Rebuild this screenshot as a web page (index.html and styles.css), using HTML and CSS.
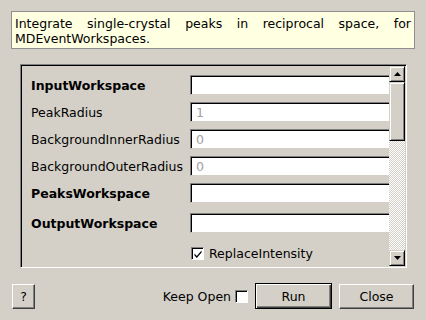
FILE: index.html
```html
<!DOCTYPE html>
<html>
<head>
<meta charset="utf-8">
<link rel="stylesheet" href="styles.css">
</head>
<body>
<div class="desc">Integrate single-crystal peaks in reciprocal space, for MDEventWorkspaces.</div>
<div class="frame">
  <div class="viewport">
    <div class="rows">
      <div class="row"><span class="label bold">InputWorkspace</span><span class="field"></span></div>
      <div class="row"><span class="label">PeakRadius</span><span class="field">1</span></div>
      <div class="row"><span class="label">BackgroundInnerRadius</span><span class="field">0</span></div>
      <div class="row"><span class="label">BackgroundOuterRadius</span><span class="field">0</span></div>
      <div class="row"><span class="label bold">PeaksWorkspace</span><span class="field"></span></div>
      <div class="row extra"><span class="label bold">OutputWorkspace</span><span class="field"></span></div>
      <div class="row check-row"><span class="label"></span><span class="check-wrap"><span class="check checked"><svg width="10" height="10" viewBox="0 0 10 10"><path d="M1.5 4.5 L3.8 7 L8.5 1.5 L8.5 3.5 L3.8 9 L1.5 6.5 Z" fill="#000"/></svg></span><span class="check-text">ReplaceIntensity</span></span></div>
    </div>
  </div>
  <div class="scrollbar">
    <div class="sbtn"><svg width="7" height="4" viewBox="0 0 7 4"><path d="M3.5 0 L7 4 L0 4 Z" fill="#000"/></svg></div>
    <div class="slider"></div>
    <div class="track"></div>
    <div class="sbtn"><svg width="7" height="4" viewBox="0 0 7 4"><path d="M0 0 L7 0 L3.5 4 Z" fill="#000"/></svg></div>
  </div>
</div>
<div class="bottom">
  <button class="btn help">?</button>
  <div class="spacer"></div>
  <span class="keep">Keep Open</span>
  <span class="check"></span>
  <button class="btn run">Run</button>
  <button class="btn close">Close</button>
</div>
</body>
</html>
```
FILE: styles.css
```css
html, body {
  margin: 0;
  padding: 0;
}
body {
  width: 426px;
  height: 320px;
  background: #d4d0c8;
  font-family: "DejaVu Sans", sans-serif;
  font-size: 12.5px;
  color: #000;
  overflow: hidden;
}
.desc {
  box-sizing: border-box;
  margin: 11px 11px 0 11px;
  height: 38px;
  border: 1px solid #8f8f8f;
  background: #ffffe1;
  padding: 4px 3px 0 3px;
  line-height: 15px;
  text-align: justify;
}
.frame {
  box-sizing: border-box;
  margin: 15px 0 0 20px;
  width: 387px;
  height: 204px;
  border-top: 1px solid #808080;
  border-left: 1px solid #808080;
  border-right: 1px solid #fff;
  border-bottom: 1px solid #fff;
  box-shadow: inset 1px 1px 0 #000, inset -1px -1px 0 #d4d0c8;
  display: flex;
  padding: 1px 1px 1px 1px;
}
.viewport {
  flex: 1;
  overflow: hidden;
  position: relative;
}
.rows {
  display: flex;
  flex-direction: column;
  gap: 7px;
  padding: 9px 0 0 9px;
}
.row {
  display: flex;
  align-items: center;
  height: 20px;
}
.row.extra { margin-top: 3px; }
.row.check-row { margin-top: 3px; }
.label {
  width: 159px;
  flex: none;
  white-space: nowrap;
}
.bold { font-weight: bold; }
.field {
  box-sizing: border-box;
  width: 220px;
  height: 20px;
  flex: none;
  background: #fff;
  border-top: 1px solid #808080;
  border-left: 1px solid #808080;
  border-bottom: 1px solid #d4d0c8;
  box-shadow: inset 1px 1px 0 #000;
  color: #a0a0a0;
  padding: 2px 0 0 5px;
  line-height: 15px;
}
.check-wrap {
  display: flex;
  align-items: center;
  gap: 5px;
  margin-left: 1px;
}
.check {
  box-sizing: border-box;
  width: 13px;
  height: 13px;
  background: #fff;
  border-top: 1px solid #808080;
  border-left: 1px solid #808080;
  border-right: 1px solid #fff;
  border-bottom: 1px solid #fff;
  box-shadow: inset 1px 1px 0 #000;
  display: flex;
  align-items: center;
  justify-content: center;
  flex: none;
}
.check svg { margin: 1px 0 0 1px; }
.scrollbar {
  width: 16px;
  flex: none;
  display: flex;
  flex-direction: column;
}
.sbtn, .slider {
  box-sizing: border-box;
  background: #d4d0c8;
  border-top: 1px solid #d4d0c8;
  border-left: 1px solid #d4d0c8;
  border-right: 1px solid #000;
  border-bottom: 1px solid #000;
  box-shadow: inset 1px 1px 0 #fff, inset -1px -1px 0 #808080;
}
.sbtn {
  height: 16px;
  display: flex;
  align-items: center;
  justify-content: center;
  flex: none;
}
.slider {
  height: 59px;
  flex: none;
}
.track {
  flex: 1;
  background-color: #fff;
  background-image: repeating-conic-gradient(#d4d0c8 0 25%, #fff 0 50%);
  background-size: 2px 2px;
}
.bottom {
  display: flex;
  align-items: center;
  margin: 15px 12px 0 12px;
  height: 26px;
}
.spacer { flex: 1; }
.btn {
  box-sizing: border-box;
  font-family: "DejaVu Sans", sans-serif;
  font-size: 12.5px;
  color: #000;
  background: #d4d0c8;
  border-top: 1px solid #fff;
  border-left: 1px solid #fff;
  border-right: 1px solid #404040;
  border-bottom: 1px solid #404040;
  box-shadow: inset -1px -1px 0 #808080;
  padding: 0;
  height: 25px;
}
.help { width: 23px; }
.keep { margin-right: 4px; }
.bottom .check { box-shadow: inset 1px 1px 0 #000; margin-right: 7px; }
.run {
  width: 77px;
  height: 26px;
  border: 1px solid #000;
  box-shadow: inset 1px 1px 0 #fff, inset -1px -1px 0 #404040, inset -2px -2px 0 #808080;
  margin-right: 7px;
}
.close { width: 75px; }
```
